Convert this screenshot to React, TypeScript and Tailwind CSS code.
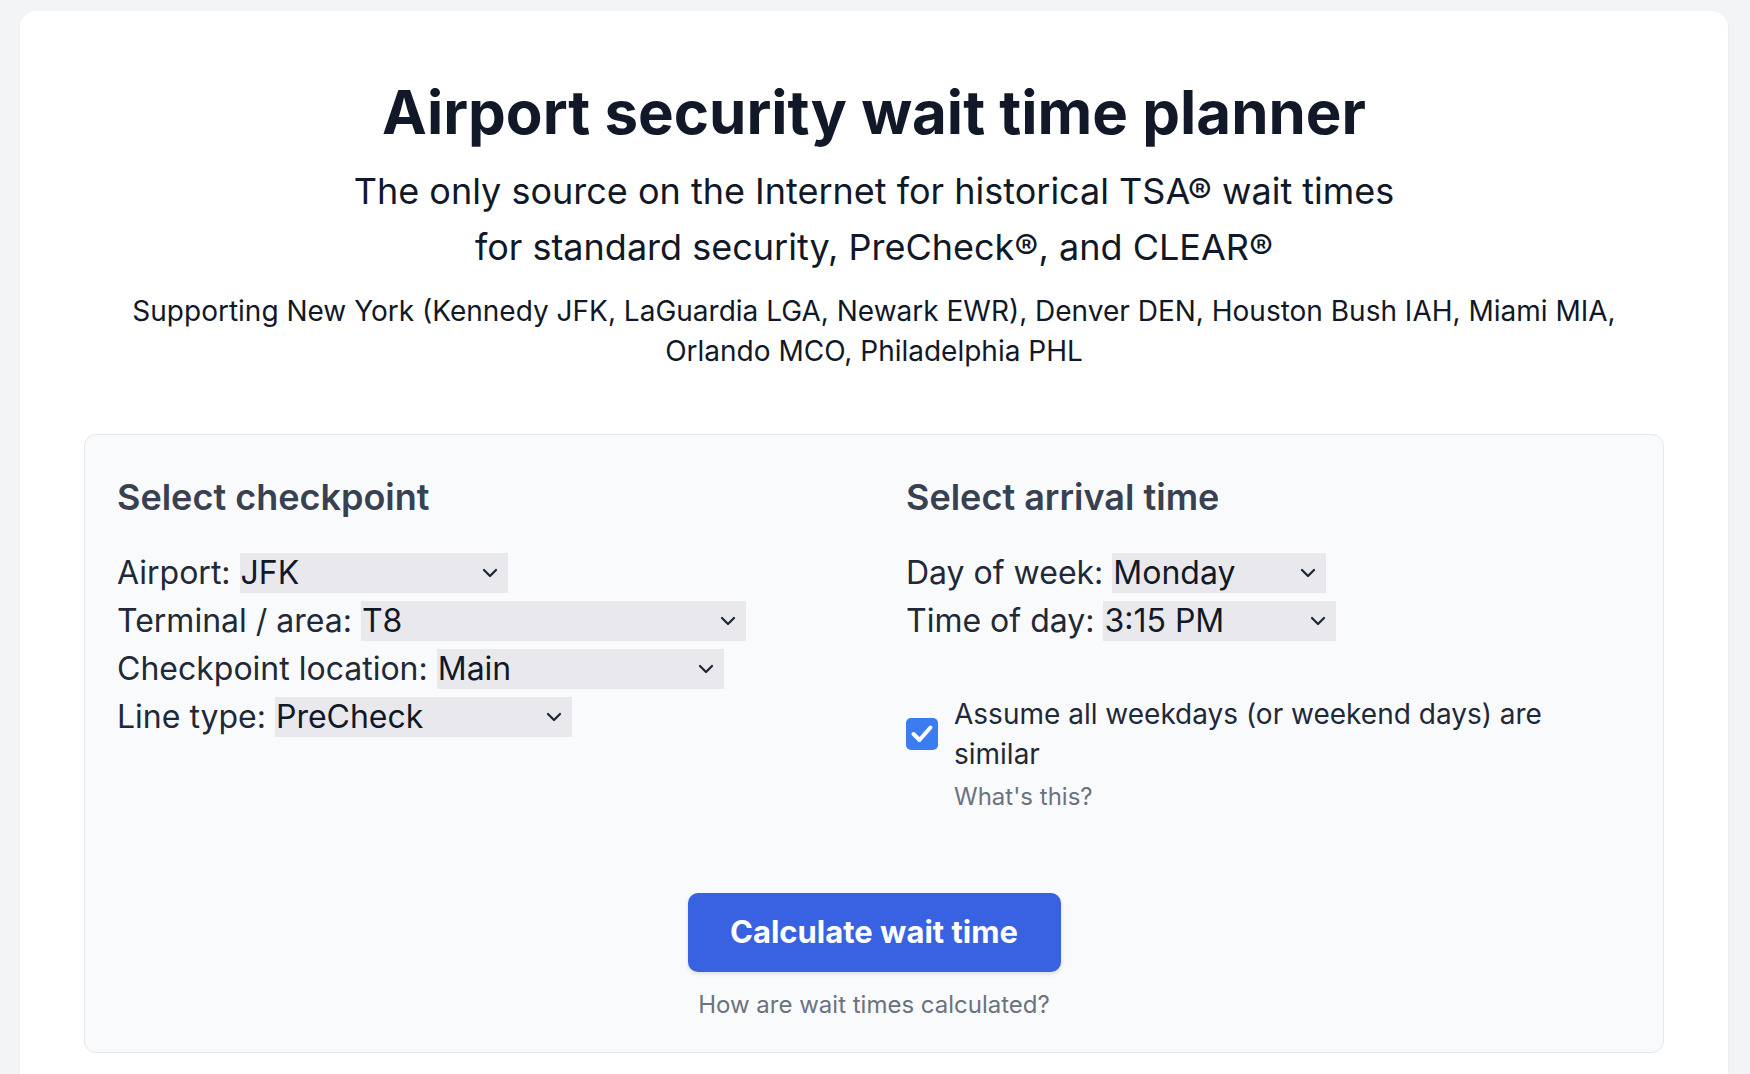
import React from "react";

function Chevron() {
  return (
    <svg width="16" height="10" viewBox="0 0 16 10" fill="none" className="shrink-0">
      <path d="M2 2 L8 8 L14 2" stroke="#1f2937" strokeWidth="2.3" strokeLinecap="round" strokeLinejoin="round" />
    </svg>
  );
}

function FakeSelect({ value, width }: { value: string; width: string }) {
  return (
    <span className={`inline-flex h-[40px] items-center justify-between bg-[#e9e9ed] pl-[1px] pr-[10px] align-middle text-[#111827] ${width}`}>
      <span>{value}</span>
      <Chevron />
    </span>
  );
}

function Row({ label, value, width }: { label: string; value: string; width: string }) {
  return (
    <div className="flex h-[48px] items-center whitespace-nowrap">
      <span className="mr-[9px]">{label}</span>
      <FakeSelect value={value} width={width} />
    </div>
  );
}

export default function App() {
  return (
    <div className="min-h-screen bg-[#f3f4f6] px-[20px] pr-[22px] pt-[11px] font-['Inter','Noto_Sans',sans-serif] text-[#111827]">
      <div className="rounded-2xl bg-white px-16 pb-10 pt-16 shadow-[0_1px_3px_rgba(0,0,0,0.06)]">
        <h1 className="text-center text-[60px] font-bold leading-[75px] text-[#111827]">
          Airport security wait time planner
        </h1>
        <p className="mt-[13px] text-center text-[36px] leading-[56px] text-[#111827]">
          The only source on the Internet for historical TSA® wait times
          <br />
          for standard security, PreCheck®, and CLEAR®
        </p>
        <p className="mt-[16px] text-center text-[28px] leading-[40px] text-[#111827]">
          Supporting New York (Kennedy JFK, LaGuardia LGA, Newark EWR), Denver DEN, Houston Bush IAH, Miami MIA,
          <br />
          Orlando MCO, Philadelphia PHL
        </p>

        <div className="mt-[63px] rounded-xl border border-[#e5e7eb] bg-[#f9fafb] px-8 pb-[31px] pt-[42px]">
          <div className="flex">
            <div className="w-[789px] shrink-0">
              <h2 className="text-[36px] font-semibold leading-[40px] text-[#374151]">Select checkpoint</h2>
              <div className="mt-[32px] text-[32px] text-[#1f2937]">
                <Row label="Airport:" value="JFK" width="w-[268px]" />
                <Row label="Terminal / area:" value="T8" width="w-[385px]" />
                <Row label="Checkpoint location:" value="Main" width="w-[287px]" />
                <Row label="Line type:" value="PreCheck" width="w-[297px]" />
              </div>
            </div>
            <div className="flex-1">
              <h2 className="text-[36px] font-semibold leading-[40px] text-[#374151]">Select arrival time</h2>
              <div className="mt-[32px] text-[32px] text-[#1f2937]">
                <Row label="Day of week:" value="Monday" width="w-[214px]" />
                <Row label="Time of day:" value="3:15 PM" width="w-[233px]" />
              </div>
              <div className="mt-[49px] flex items-center">
                <span className="flex h-[32px] w-[32px] shrink-0 items-center justify-center rounded-[5px] bg-[#3b7cf0]">
                  <svg width="32" height="32" viewBox="0 0 32 32" fill="none">
                    <path d="M7.5 16 L13.5 22 L24.5 9.5" stroke="white" strokeWidth="4" strokeLinecap="round" strokeLinejoin="round" />
                  </svg>
                </span>
                <span className="ml-[16px] max-w-[650px] text-[28px] leading-[40px] text-[#1f2937]">
                  Assume all weekdays (or weekend days) are similar
                </span>
              </div>
              <div className="ml-[48px] mt-[7px] text-[24px] leading-[32px] text-[#6b7280]">What's this?</div>
            </div>
          </div>
          <div className="mt-[80px] flex flex-col items-center">
            <button className="h-[79px] w-[373px] rounded-[10px] bg-[#3962e3] text-[31px] font-bold text-white shadow-[0_2px_4px_rgba(0,0,0,0.12)]">
              Calculate wait time
            </button>
            <div className="mt-[17px] text-[24px] leading-[32px] text-[#6b7280]">How are wait times calculated?</div>
          </div>
        </div>
      </div>
    </div>
  );
}
